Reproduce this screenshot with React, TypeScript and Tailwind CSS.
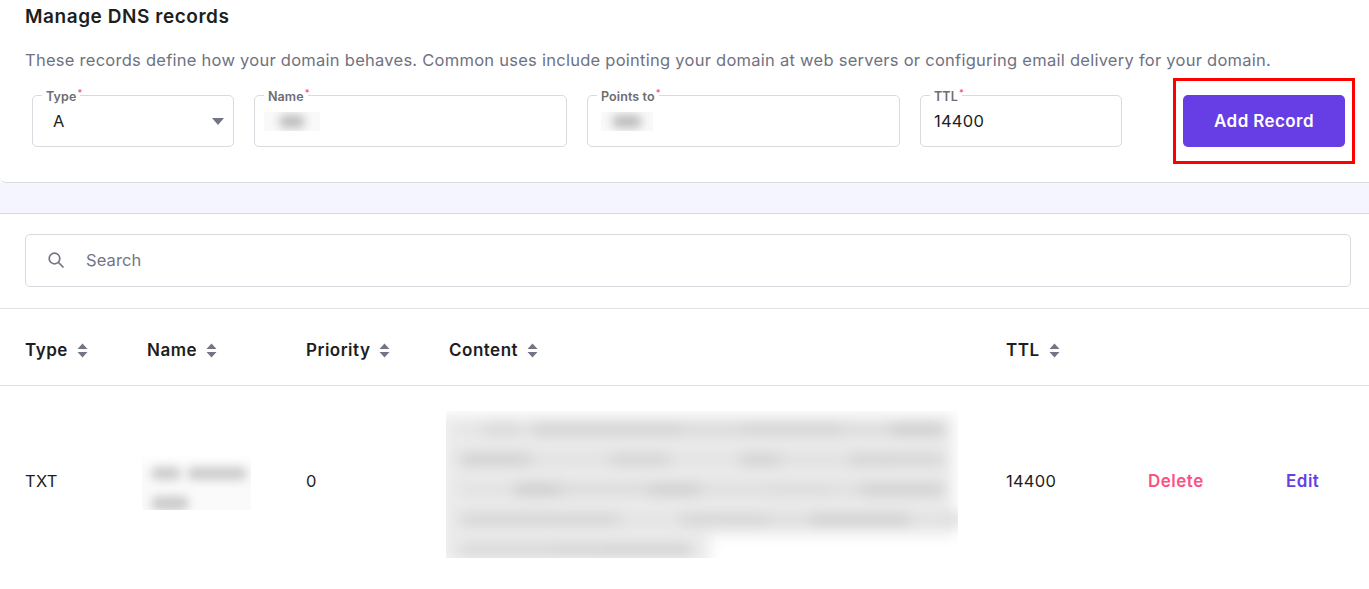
import React from "react";

const FONT = "font-['Inter','Noto_Sans',sans-serif]";

function Sort() {
  return (
    <svg width="11" height="15" viewBox="0 0 11 15" className="shrink-0" aria-hidden="true">
      <path d="M5.5 0.5 L10.5 6 H0.5 Z M0.5 9 H10.5 L5.5 14.5 Z" fill="#727586" />
    </svg>
  );
}

function Blur({ w, dark = "#b5b5b5", h = 9 }: { w: number; dark?: string; h?: number }) {
  return <div className="shrink-0 rounded-full blur-[5px]" style={{ width: w, height: h, background: dark }} />;
}

function Field({ label, width, children }: { label: string; width: string; children: React.ReactNode }) {
  return (
    <div className={`relative h-[52px] rounded-[5px] border border-[#d8dae0] bg-white ${width}`}>
      <span className="absolute left-[9px] top-[-7px] bg-white px-[4px] text-[12.5px] leading-[15px] font-semibold tracking-[0.1px] text-[#6d6d72]">
        {label}
        <sup className="absolute top-[-1px] ml-[1px] text-[9px] leading-[9px] text-[#fc5185]">*</sup>
      </span>
      {children}
    </div>
  );
}

function Head({ label, width }: { label: string; width: string }) {
  return (
    <div className={`flex items-center gap-[9px] text-[17px] font-semibold tracking-[0.5px] text-[#1d1e20] ${width}`}>
      {label}
      <Sort />
    </div>
  );
}

const CONTENT_ROWS: [number, string][][] = [
  [[24, "#e4e4e4"], [36, "#d6d6d6"], [12, "#e4e4e4"], [150, "#cfcfcf"], [60, "#d8d8d8"], [100, "#d0d0d0"], [50, "#dadada"], [52, "#c8c8c8"]],
  [[70, "#cccccc"], [80, "#e0e0e0"], [60, "#d0d0d0"], [70, "#e2e2e2"], [40, "#cdcdcd"], [70, "#dedede"], [40, "#cfcfcf"], [54, "#d2d2d2"]],
  [[55, "#e0e0e0"], [45, "#c8c8c8"], [90, "#d8d8d8"], [50, "#cacaca"], [70, "#dcdcdc"], [60, "#d8d8d8"], [30, "#dddddd"], [84, "#cccccc"]],
  [[160, "#d2d2d2"], [60, "#e2e2e2"], [90, "#d2d2d2"], [40, "#dcdcdc"], [100, "#cccccc"], [34, "#e0e0e0"], [20, "#d8d8d8"]],
  [[90, "#d6d6d6"], [50, "#d2d2d2"], [92, "#d0d0d0"]],
];

export default function App() {
  return (
    <div className={`${FONT} relative h-[589px] w-[1369px] overflow-hidden bg-white`}>
      <section className="h-[183px] rounded-bl-[6px] border-b border-[#d8dae0] pt-[5px] pr-[24px] pl-[25px]">
        <h2 className="text-[19px] leading-[24px] font-semibold tracking-[0.55px] text-[#1d1e20]">Manage DNS records</h2>
        <p className="mt-[19px] text-[16.5px] leading-[24px] tracking-[0.26px] whitespace-nowrap text-[#6f7282]">
          These records define how your domain behaves. Common uses include pointing your domain at web servers or configuring email delivery for your domain.
        </p>
        <div className="mt-[23px] flex pl-[7px]">
          <div className="flex gap-[20px]">
            <Field label="Type" width="w-[202px]">
              <div className="flex h-full items-center justify-between pr-[9px] pl-[20px]">
                <span className="text-[16.5px] text-[#1d1e20]">A</span>
                <svg width="12" height="7" viewBox="0 0 12 7" aria-hidden="true">
                  <path d="M0 0H12L6 7Z" fill="#727586" />
                </svg>
              </div>
            </Field>
            <Field label="Name" width="w-[313px]">
              <div className="flex h-full items-center overflow-hidden pl-[9px]">
                <div className="flex h-[19px] w-[56px] items-center justify-center overflow-hidden bg-[#f9f9f9]">
                  <Blur w={26} h={13} dark="#bcbcbc" />
                </div>
              </div>
            </Field>
            <Field label="Points to" width="w-[313px]">
              <div className="flex h-full items-center overflow-hidden pl-[13px]">
                <div className="flex h-[19px] w-[52px] items-center justify-center overflow-hidden bg-[#f9f9f9]">
                  <Blur w={30} h={13} dark="#bcbcbc" />
                </div>
              </div>
            </Field>
            <Field label="TTL" width="w-[202px]">
              <div className="flex h-full items-center pl-[13px] text-[16.5px] tracking-[0.25px] text-[#1d1e20]">14400</div>
            </Field>
          </div>
          <button className="ml-[61px] h-[52px] w-[162px] shrink-0 rounded-[5px] bg-[#673de6] pt-[2px] text-[17px] font-semibold tracking-[0.4px] text-white">
            Add Record
          </button>
        </div>
      </section>

      <div className="h-[31px] border-b border-[#d8dae0] bg-[#f4f5ff]" />

      <div className="flex h-[95px] items-center border-b border-[#e2e3e7] pr-[18px] pb-[2px] pl-[25px]">
        <div className="flex h-[53px] w-[1326px] items-center rounded-[5px] border border-[#d8dae0] pl-[20px]">
          <svg width="20" height="20" viewBox="0 0 20 20" fill="none" stroke="#727586" strokeWidth="1.7" aria-hidden="true">
            <circle cx="8.5" cy="8.5" r="5.3" />
            <path d="M12.5 12.5L17.5 17.5" />
          </svg>
          <span className="ml-[20px] text-[16.5px] tracking-[0.1px] text-[#727586]">Search</span>
        </div>
      </div>

      <div className="flex h-[77px] items-center border-b border-[#e2e3e7] pt-[7px] pl-[25px]">
        <Head label="Type" width="w-[122px]" />
        <Head label="Name" width="w-[159px]" />
        <Head label="Priority" width="w-[143px]" />
        <Head label="Content" width="w-[557px]" />
        <Head label="TTL" width="w-[142px]" />
      </div>

      <div className="flex h-[190px] items-center pl-[25px] text-[16.5px] tracking-[0.25px] text-[#1d1e20]">
        <div className="w-[122px]">TXT</div>
        <div className="w-[159px]">
          <div className="-ml-[5px] flex h-[58px] w-[109px] flex-col gap-[16px] overflow-hidden bg-[linear-gradient(to_bottom,#ffffff,#fafafa_30%)] pt-[15px] pl-[9px]">
            <div className="flex gap-[6px]">
              <Blur w={30} h={13} dark="#cccccc" />
              <Blur w={60} h={13} dark="#cccccc" />
            </div>
            <Blur w={38} h={15} dark="#cccccc" />
          </div>
        </div>
        <div className="w-[143px]">0</div>
        <div className="w-[557px]">
          <div className="-ml-[3px] h-[147px] w-[512px] translate-y-[3px] overflow-hidden">
            <div className="-ml-[6px] flex flex-col pt-[4px] blur-[7px]">
              {CONTENT_ROWS.map((row, i) => (
                <div
                  key={i}
                  className={`flex h-[30px] items-center bg-[#ebebeb] pl-[20px] ${i === 4 ? "w-[270px]" : "w-[514px]"}`}
                >
                  {row.map(([w, c], j) => (
                    <div key={j} className="h-[11px] shrink-0" style={{ width: w, background: c }} />
                  ))}
                </div>
              ))}
            </div>
          </div>
        </div>
        <div className="w-[142px]">14400</div>
        <div className="w-[138px] pt-[1px] text-[17px] font-semibold tracking-[0.5px] text-[#fc5185]">Delete</div>
        <div className="pt-[1px] text-[17px] font-semibold tracking-[0.5px] text-[#673de6]">Edit</div>
      </div>

      <div className="pointer-events-none absolute top-[78px] left-[1173px] h-[86px] w-[182px] border-[3px] border-[#fe0000]" />
    </div>
  );
}
